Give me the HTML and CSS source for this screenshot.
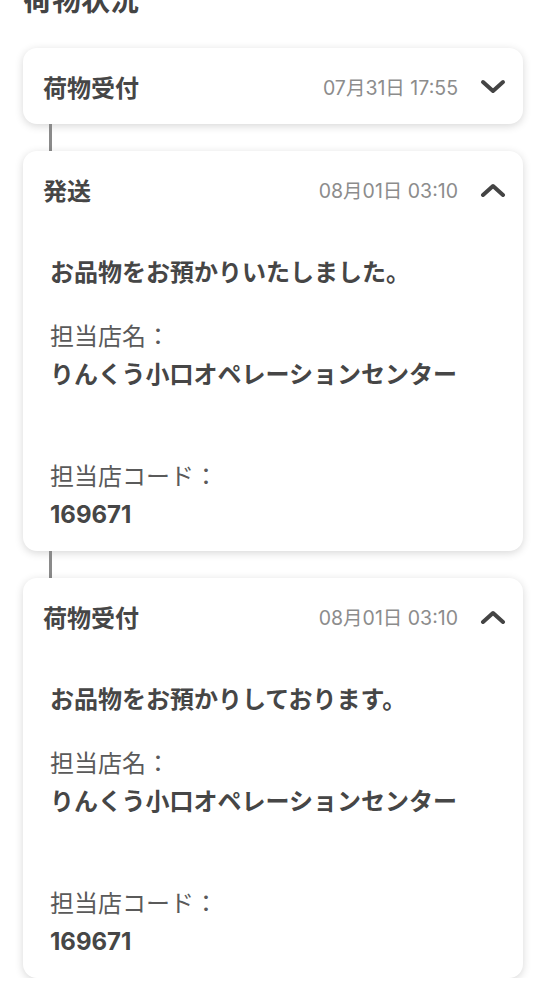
FILE: index.html
```html
<!DOCTYPE html>
<html lang="ja">
<head>
    <meta charset="UTF-8">
    <meta name="viewport" content="width=device-width, initial-scale=1.0">
    <title>荷物状況</title>
    <link rel="stylesheet" href="styles.css">
</head>
<body>
    <div class="page">
        <h2 class="page-title">荷物状況</h2>

        <div class="timeline">
            <div class="card">
                <div class="card-header">
                    <span class="status">荷物受付</span>
                    <span class="date">07月31日 17:55</span>
                    <svg class="chevron" width="26" height="15" viewBox="0 0 26 15">
                        <polyline points="3,3 13,12 23,3"></polyline>
                    </svg>
                </div>
            </div>

            <div class="connector"></div>

            <div class="card">
                <div class="card-header">
                    <span class="status">発送</span>
                    <span class="date">08月01日 03:10</span>
                    <svg class="chevron" width="26" height="15" viewBox="0 0 26 15">
                        <polyline points="3,13 13,4 23,13"></polyline>
                    </svg>
                </div>
                <div class="card-body">
                    <div class="message">お品物をお預かりいたしました。</div>
                    <div class="field">
                        <div class="field-label">担当店名：</div>
                        <div class="field-value">りんくう小口オペレーションセンター</div>
                        <div class="field-value"></div>
                    </div>
                    <div class="field">
                        <div class="field-label">担当店コード：</div>
                        <div class="field-value">169671</div>
                    </div>
                </div>
            </div>

            <div class="connector"></div>

            <div class="card">
                <div class="card-header">
                    <span class="status">荷物受付</span>
                    <span class="date">08月01日 03:10</span>
                    <svg class="chevron" width="26" height="15" viewBox="0 0 26 15">
                        <polyline points="3,13 13,4 23,13"></polyline>
                    </svg>
                </div>
                <div class="card-body">
                    <div class="message">お品物をお預かりしております。</div>
                    <div class="field">
                        <div class="field-label">担当店名：</div>
                        <div class="field-value">りんくう小口オペレーションセンター</div>
                        <div class="field-value"></div>
                    </div>
                    <div class="field">
                        <div class="field-label">担当店コード：</div>
                        <div class="field-value">169671</div>
                    </div>
                </div>
            </div>
        </div>
    </div>
</body>
</html>
```

FILE: styles.css
```css
* {
    box-sizing: border-box;
    margin: 0;
    padding: 0;
}

body {
    font-family: Inter, "Noto Sans CJK JP", sans-serif;
    background: #ffffff;
    color: #444444;
    overflow: hidden;
}

.page {
    padding: 0 25px 0 23px;
}

.page-title {
    font-size: 29px;
    font-weight: 700;
    line-height: 36px;
    margin-top: -17px;
    margin-bottom: 29px;
    color: #444444;
}

.card {
    background: white;
    border-radius: 14px;
    box-shadow: 0 2px 8px rgba(0, 0, 0, 0.16);
}

.card-header {
    height: 76px;
    display: flex;
    align-items: center;
    padding: 0 17px 0 20px;
}

.status {
    flex: 1;
    font-size: 24px;
    font-weight: 700;
    color: #464646;
}

.date {
    font-size: 19.5px;
    color: #8c8c8c;
    margin-right: 22px;
}

.chevron polyline {
    fill: none;
    stroke: #444444;
    stroke-width: 4;
    stroke-linecap: round;
    stroke-linejoin: round;
}

.connector {
    width: 3px;
    height: 27px;
    margin-left: 26px;
    background: #8a8a8a;
}

.card-body {
    padding: 27px 20px 17px 27px;
    display: flex;
    flex-direction: column;
    gap: 26px;
}

.message {
    font-size: 24px;
    font-weight: 700;
    line-height: 38px;
    color: #464646;
}

.field-label {
    font-size: 24px;
    font-weight: 400;
    line-height: 38px;
    color: #5a5a5a;
}

.field-value {
    font-size: 24px;
    font-weight: 700;
    line-height: 38px;
    min-height: 38px;
    color: #464646;
}
```
